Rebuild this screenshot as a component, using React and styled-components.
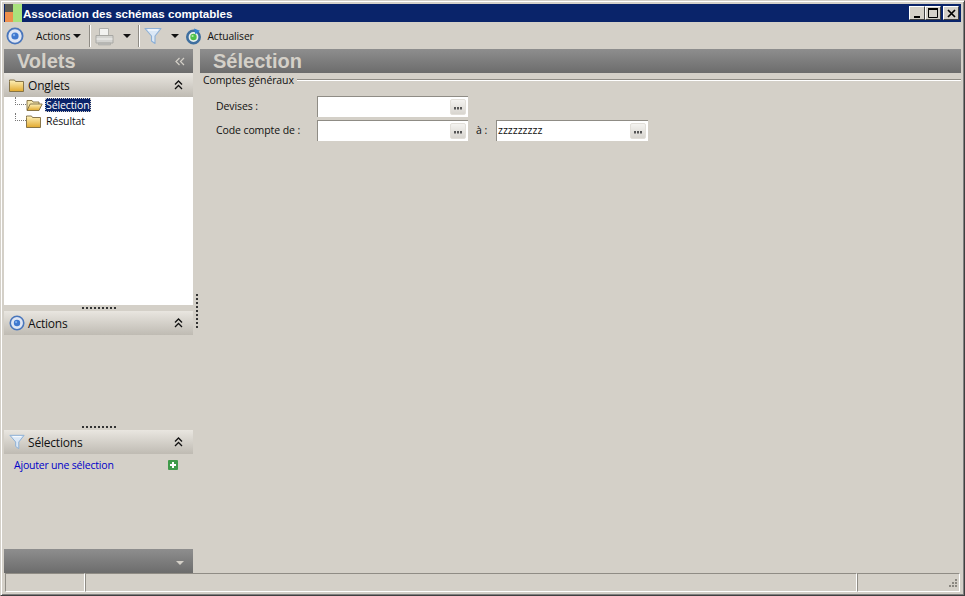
import React from "react";
import styled, { createGlobalStyle } from "styled-components";

const GlobalStyle = createGlobalStyle`
  html, body { margin: 0; padding: 0; height: 100%; overflow: hidden; }
  body { font-family: "Open Sans", "Liberation Sans", sans-serif; font-size: 11px; color: #111; }
`;

const TargetIcon = ({ size = 18 }) => (
  <svg width={size} height={size} viewBox="0 0 18 18">
    <circle cx="9" cy="9" r="7.6" fill="#dfe6f4" stroke="#4a76bb" strokeWidth="1.8" />
    <circle cx="9" cy="9" r="3.6" fill="#3f78cf" />
    <circle cx="8" cy="8" r="1.2" fill="#86b2ec" />
  </svg>
);

const FunnelIcon = ({ size = 18 }) => (
  <svg width={size} height={size} viewBox="0 0 18 18">
    <path d="M1 1.5h16L11 9v7.5L7.5 14V9z" fill="#dbe8f6" stroke="#8db0d6" strokeWidth="1.1" strokeLinejoin="round" />
    <path d="M4 3h10" stroke="#fff" strokeWidth="1" />
  </svg>
);

const PrinterIcon = () => (
  <svg width="19" height="19" viewBox="0 0 19 19">
    <path d="M4.5 1.5h9v7h-9z" fill="#f2f2f0" stroke="#b0b0ac" />
    <path d="M1 8.5h17v7.5H1z" fill="#d3d3d0" stroke="#a8a8a4" strokeLinejoin="round" />
    <path d="M1.5 12h16" stroke="#f2f2f0" />
    <path d="M3.5 16h12v2h-12z" fill="#bdbdb9" stroke="#a8a8a4" strokeWidth="0.6" />
  </svg>
);

const RefreshIcon = () => (
  <svg width="17" height="17" viewBox="0 0 17 17">
    <circle cx="8.5" cy="9" r="6.2" fill="#e8f0ee" stroke="#3f6f9f" strokeWidth="2.6" />
    <circle cx="8.5" cy="9" r="3.2" fill="#4fc04a" />
    <circle cx="7.6" cy="8" r="1.1" fill="#b4ecaa" />
    <path d="M9 0.5l6 2.2-4.6 3.6z" fill="#2f7fd0" />
  </svg>
);

const FolderGradient = () => (
  <defs>
    <linearGradient id="folderFill" x1="0" y1="0" x2="0" y2="1">
      <stop offset="0" stopColor="#fff3bd" />
      <stop offset="1" stopColor="#e2a92e" />
    </linearGradient>
  </defs>
);

const FolderIcon = ({ size = 15 }) => (
  <svg width={size} height={size - 2} viewBox="0 0 15 13">
    <FolderGradient />
    <path d="M0.5 2.5V1h5l1 1.5h8v10H.5z" fill="url(#folderFill)" stroke="#7d6a3c" strokeWidth="0.9" />
  </svg>
);

const OpenFolderIcon = () => (
  <svg width="17" height="12" viewBox="0 0 17 12">
    <FolderGradient />
    <path d="M1 11V1.5h5l1 1.5h6v2" fill="#f6e7ad" stroke="#7d6a3c" strokeWidth="0.9" />
    <path d="M1 11.5L4.2 5h12L13 11.5z" fill="url(#folderFill)" stroke="#7d6a3c" strokeWidth="0.9" strokeLinejoin="round" />
  </svg>
);

const PlusIcon = () => (
  <svg width="10" height="10" viewBox="0 0 10 10">
    <rect width="10" height="10" rx="1" fill="#3f9a4a" />
    <path d="M5 2v6M2 5h6" stroke="#fff" strokeWidth="2" />
  </svg>
);

const DoubleChevronUp = () => (
  <svg width="9" height="10" viewBox="0 0 9 10">
    <path d="M1 4.5l3.5-3.5L8 4.5M1 9l3.5-3.5L8 9" fill="none" stroke="#111" strokeWidth="1.3" />
  </svg>
);

const DoubleChevronLeft = () => (
  <svg width="10" height="9" viewBox="0 0 10 9">
    <path d="M4.5 1L1 4.5 4.5 8M9 1L5.5 4.5 9 8" fill="none" stroke="#d4d0c8" strokeWidth="1.2" />
  </svg>
);

const EllipsisIcon = () => (
  <svg width="8" height="3" viewBox="0 0 8 3" fill="#555">
    <rect x="0" y="0" width="2" height="2.5" />
    <rect x="3" y="0" width="2" height="2.5" />
    <rect x="6" y="0" width="2" height="2.5" />
  </svg>
);

const App = () => {
  return (
    <>
      <GlobalStyle />
      <Window>
        <TitleBar>
          <AppLogo>
            <svg width="17" height="18" viewBox="0 0 17 18">
              <rect width="8" height="8" fill="#5a5a52" />
              <rect x="8" width="9" height="18" fill="#a9e27c" />
              <rect y="8" width="8" height="10" fill="#ee8f4c" />
            </svg>
          </AppLogo>
          <TitleText>Association des schémas comptables</TitleText>
          <WindowButtons>
            <WindowButton>
              <svg width="9" height="9" viewBox="0 0 9 9"><path d="M1 7h6v2H1z" fill="#000" /></svg>
            </WindowButton>
            <WindowButton>
              <svg width="11" height="10" viewBox="0 0 11 10"><path d="M.5 1.5h9v8h-9z" fill="none" stroke="#000" /><path d="M0 1h10" stroke="#000" strokeWidth="2" /></svg>
            </WindowButton>
            <WindowButton $gap>
              <svg width="9" height="9" viewBox="0 0 9 9"><path d="M1 1l7 7M8 1L1 8" stroke="#000" strokeWidth="1.7" /></svg>
            </WindowButton>
          </WindowButtons>
        </TitleBar>

        <Toolbar>
          <ToolIcon $left={2}><TargetIcon /></ToolIcon>
          <ToolLabel $left={12}>Actions</ToolLabel>
          <Caret $left={3} />
          <ToolSeparator $left={8} />
          <ToolIcon $left={4}><PrinterIcon /></ToolIcon>
          <Caret $left={9} />
          <ToolSeparator $left={7} />
          <ToolIcon $left={4}><FunnelIcon /></ToolIcon>
          <Caret $left={9} />
          <ToolIcon $left={6}><RefreshIcon /></ToolIcon>
          <ToolLabel $left={5}>Actualiser</ToolLabel>
        </Toolbar>

        <Body>
          <SidePane>
            <DarkHeader $side>
              <PaneTitle>Volets</PaneTitle>
              <DoubleChevronLeft />
            </DarkHeader>

            <LightHeader>
              <HeaderIcon><FolderIcon /></HeaderIcon>
              <HeaderText>Onglets</HeaderText>
              <DoubleChevronUp />
            </LightHeader>
            <TreePanel>
              <TreeRow>
                <Connector />
                <OpenFolderIcon />
                <SelectedNode>Sélection</SelectedNode>
              </TreeRow>
              <TreeRow>
                <Connector $last />
                <FolderIcon size={15} />
                <TreeNode>Résultat</TreeNode>
              </TreeRow>
            </TreePanel>
            <HorizontalGrip><GripDots /></HorizontalGrip>

            <LightHeader>
              <HeaderIcon><TargetIcon size={16} /></HeaderIcon>
              <HeaderText>Actions</HeaderText>
              <DoubleChevronUp />
            </LightHeader>
            <ActionsPanel />
            <HorizontalGrip><GripDots /></HorizontalGrip>

            <LightHeader>
              <HeaderIcon><FunnelIcon size={16} /></HeaderIcon>
              <HeaderText>Sélections</HeaderText>
              <DoubleChevronUp />
            </LightHeader>
            <SelectionsPanel>
              <AddLink>Ajouter une sélection</AddLink>
              <AddIcon><PlusIcon /></AddIcon>
            </SelectionsPanel>

            <FooterHeader $side>
              <DownTriangle />
            </FooterHeader>
          </SidePane>

          <VerticalGrip><VerticalDots /></VerticalGrip>

          <MainPane>
            <DarkHeader>
              <PaneTitle>Sélection</PaneTitle>
            </DarkHeader>
            <GroupTitle>
              <span>Comptes généraux</span>
              <GroupLine />
            </GroupTitle>
            <Form>
              <FieldRow>
                <FieldLabel>Devises :</FieldLabel>
                <Field>
                  <FieldValue />
                  <EllipsisButton><EllipsisIcon /></EllipsisButton>
                </Field>
              </FieldRow>
              <FieldRow>
                <FieldLabel>Code compte de :</FieldLabel>
                <Field>
                  <FieldValue />
                  <EllipsisButton><EllipsisIcon /></EllipsisButton>
                </Field>
                <ToLabel>à :</ToLabel>
                <Field $wide>
                  <FieldValue>zzzzzzzzz</FieldValue>
                  <EllipsisButton><EllipsisIcon /></EllipsisButton>
                </Field>
              </FieldRow>
            </Form>
          </MainPane>
        </Body>

        <StatusBar>
          <StatusCell $width={80} />
          <StatusCell $grow />
          <StatusCell $width={103}>
            <ResizeGrip>
              <svg width="12" height="12" viewBox="0 0 12 12" fill="#8a8780">
                <rect x="9" y="1" width="2" height="2" />
                <rect x="6" y="4" width="2" height="2" />
                <rect x="9" y="4" width="2" height="2" />
                <rect x="3" y="7" width="2" height="2" />
                <rect x="6" y="7" width="2" height="2" />
                <rect x="9" y="7" width="2" height="2" />
              </svg>
            </ResizeGrip>
          </StatusCell>
        </StatusBar>
      </Window>
    </>
  );
};

const Window = styled.div`
  box-sizing: border-box;
  width: 965px;
  height: 596px;
  display: flex;
  flex-direction: column;
  background: #d4d0c8;
  border: 1px solid;
  border-color: #d4d0c8 #404040 #404040 #d4d0c8;
  box-shadow: inset 1px 1px 0 #fff, inset -1px -1px 0 #808080;
  padding: 3px;
`;

const TitleBar = styled.div`
  height: 18px;
  flex: none;
  display: flex;
  align-items: center;
  background: #0a246a;
  margin-bottom: 1px;
`;

const AppLogo = styled.div`
  display: flex;
  margin-left: 1px;
`;

const TitleText = styled.div`
  margin-left: 1px;
  font-family: "Liberation Sans", sans-serif;
  font-weight: 700;
  font-size: 11.6px;
  color: #fff;
`;

const WindowButtons = styled.div`
  margin-left: auto;
  margin-right: 2px;
  display: flex;
`;

const WindowButton = styled.div`
  box-sizing: border-box;
  width: 16px;
  height: 14px;
  margin-left: ${(p) => (p.$gap ? "2px" : "0")};
  display: flex;
  align-items: center;
  justify-content: center;
  background: #d4d0c8;
  border: 1px solid;
  border-color: #fff #404040 #404040 #fff;
`;

const Toolbar = styled.div`
  height: 26px;
  flex: none;
  display: flex;
  align-items: center;
`;

const ToolIcon = styled.div`
  display: flex;
  margin-left: ${(p) => p.$left}px;
`;

const ToolLabel = styled.span`
  margin-left: ${(p) => p.$left}px;
  font-size: 10.3px;
  letter-spacing: -0.1px;
`;

const Caret = styled.span`
  margin-left: ${(p) => p.$left}px;
  width: 0;
  height: 0;
  border-left: 4px solid transparent;
  border-right: 4px solid transparent;
  border-top: 4px solid #111;
`;

const ToolSeparator = styled.span`
  margin-left: ${(p) => p.$left}px;
  width: 1px;
  height: 22px;
  background: #8f8c85;
  border-right: 1px solid #fff;
`;

const Body = styled.div`
  flex: 1;
  min-height: 0;
  display: flex;
`;

const SidePane = styled.div`
  width: 189px;
  flex: none;
  display: flex;
  flex-direction: column;
`;

const DarkHeader = styled.div`
  box-sizing: border-box;
  height: 24px;
  flex: none;
  display: flex;
  align-items: center;
  justify-content: space-between;
  padding: 0 ${(p) => (p.$side ? "8px" : "9px")} 0 13px;
  background: linear-gradient(#8e8e8e, #6c6c6c);
`;

const PaneTitle = styled.div`
  font-family: "Liberation Sans", sans-serif;
  font-weight: 700;
  font-size: 20px;
  color: #d4d0c8;
`;

const LightHeader = styled.div`
  box-sizing: border-box;
  height: 24px;
  flex: none;
  display: flex;
  align-items: center;
  padding: 0 10px 0 4px;
  background: linear-gradient(#e9e6e0, #bfbbb3);
`;

const HeaderIcon = styled.div`
  width: 16px;
  height: 16px;
  display: flex;
  align-items: center;
  margin: 0 3px 0 1px;
`;

const HeaderText = styled.span`
  flex: 1;
  font-size: 12px;
  letter-spacing: -0.2px;
`;

const TreePanel = styled.div`
  height: 208px;
  flex: none;
  background: #fff;
`;

const TreeRow = styled.div`
  height: 16px;
  display: flex;
  align-items: center;
  padding-left: 11px;
`;

const Connector = styled.span`
  box-sizing: border-box;
  align-self: flex-start;
  width: 11px;
  height: 8px;
  border-left: 1px dotted #777;
  border-bottom: 1px dotted #777;
`;

const TreeNode = styled.span`
  margin-left: 4px;
  padding: 0 1px;
  font-size: 10.5px;
  letter-spacing: -0.1px;
`;

const SelectedNode = styled(TreeNode)`
  margin-left: 2px;
  padding: 0 2px 0 1px;
  background: #0a246a;
  color: #fff;
  outline: 1px dotted #d4d0c8;
  outline-offset: -1px;
`;

const HorizontalGrip = styled.div`
  height: 6px;
  flex: none;
  display: flex;
  justify-content: center;
  align-items: center;
  padding-bottom: 1px;
  box-sizing: border-box;
`;

const GripDots = styled.span`
  width: 34px;
  height: 2px;
  background: repeating-linear-gradient(90deg, #333 0 2px, transparent 2px 4px);
`;

const ActionsPanel = styled.div`
  height: 89px;
  flex: none;
`;

const SelectionsPanel = styled.div`
  flex: 1;
  display: flex;
  align-items: flex-start;
  justify-content: space-between;
  padding: 4px 15px 0 10px;
`;

const AddLink = styled.span`
  color: #0000c8;
  font-size: 10.5px;
  letter-spacing: -0.2px;
`;

const AddIcon = styled.span`
  display: flex;
  margin-top: 2px;
`;

const FooterHeader = styled(DarkHeader)`
  justify-content: flex-end;
`;

const DownTriangle = styled.span`
  margin-right: 1px;
  margin-top: 3px;
  width: 0;
  height: 0;
  border-left: 4px solid transparent;
  border-right: 4px solid transparent;
  border-top: 4px solid #d4d0c8;
`;

const VerticalGrip = styled.div`
  box-sizing: border-box;
  width: 7px;
  flex: none;
  display: flex;
  align-items: center;
  padding-left: 3px;
`;

const VerticalDots = styled.span`
  width: 2px;
  height: 34px;
  background: repeating-linear-gradient(180deg, #333 0 2px, transparent 2px 4px);
`;

const MainPane = styled.div`
  flex: 1;
  min-width: 0;
  display: flex;
  flex-direction: column;
`;

const GroupTitle = styled.div`
  display: flex;
  align-items: center;
  gap: 3px;
  padding-left: 3px;
  height: 14px;
  font-size: 10.5px;
  letter-spacing: -0.1px;
`;

const GroupLine = styled.span`
  flex: 1;
  height: 1px;
  background: #8f8c85;
  border-bottom: 1px solid #fff;
`;

const Form = styled.div`
  padding: 9px 0 0 16px;
  display: flex;
  flex-direction: column;
  gap: 3px;
`;

const FieldRow = styled.div`
  display: flex;
  align-items: center;
`;

const FieldLabel = styled.span`
  width: 101px;
  padding-bottom: 2px;
  font-size: 10.5px;
  letter-spacing: -0.1px;
`;

const ToLabel = styled.span`
  width: 28px;
  padding: 0 0 2px 8px;
  box-sizing: border-box;
  font-size: 10.5px;
`;

const Field = styled.div`
  box-sizing: border-box;
  width: ${(p) => (p.$wide ? "152px" : "151px")};
  height: 21px;
  display: flex;
  align-items: center;
  background: #fff;
  border-top: 1px solid #8f8c85;
  border-left: 1px solid #8f8c85;
  padding: 0 2px 0 1px;
`;

const FieldValue = styled.span`
  flex: 1;
  padding-bottom: 2px;
  font-size: 10.5px;
`;

const EllipsisButton = styled.div`
  box-sizing: border-box;
  width: 16px;
  height: 16px;
  display: flex;
  align-items: center;
  justify-content: center;
  padding-top: 3px;
  background: linear-gradient(#f4f3f0, #d8d5cf);
  border: 1px solid #e2dfd9;
  border-radius: 2px;
`;

const StatusBar = styled.div`
  height: 19px;
  flex: none;
  display: flex;
  padding: 0 1px;
`;

const StatusCell = styled.div`
  box-sizing: border-box;
  position: relative;
  ${(p) => (p.$grow ? "flex: 1;" : `width: ${p.$width}px;`)}
  border-top: 1px solid #8f8c85;
  border-left: 1px solid #8f8c85;
  border-right: 1px solid #fff;
  border-bottom: 1px solid #fff;
`;

const ResizeGrip = styled.div`
  position: absolute;
  right: 1px;
  bottom: 1px;
  display: flex;
`;

export default App;
